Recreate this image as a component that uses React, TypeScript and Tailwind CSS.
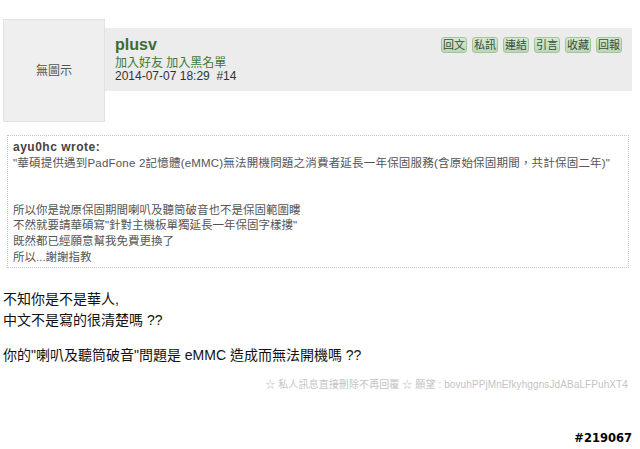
import React from "react";

const btns = ["回文", "私訊", "連結", "引言", "收藏", "回報"];

export default function App() {
  return (
    <div
      className="relative w-[640px] h-[449px] bg-white overflow-hidden text-[#222]"
      style={{ fontFamily: '"Liberation Sans", Arial, "Noto Sans CJK TC", sans-serif' }}
    >
      <div className="flex pt-[19px] pl-[3px]">
        <div className="w-[102px] h-[103px] bg-[#efefef] border border-[#e2e2e2] flex items-center justify-center text-[12px] text-[#555]">
          無圖示
        </div>
        <div className="mt-[9px] h-[63px] w-[527px] bg-[#ececec] flex justify-between pl-[10px] pr-[10px]">
          <div className="pt-[8px]">
            <div className="text-[16px] font-bold text-[#3d6b35] leading-[18px]">plusv</div>
            <div className="mt-[2px] text-[12px] leading-[14px] text-[#3d7a35]">加入好友 加入黑名單</div>
            <div className="text-[12px] leading-[13px] text-[#333]">2014-07-07 18:29 &nbsp;#14</div>
          </div>
          <div className="flex gap-[5px] pt-[9px]">
            {btns.map((b) => (
              <div
                key={b}
                className="w-[26px] h-[16px] rounded-[3px] border border-[#a3c49f] bg-gradient-to-b from-[#d4ead1] to-[#b9d8b5] flex items-center justify-center text-[11px] text-[#3b4a3a] leading-none"
              >
                {b}
              </div>
            ))}
          </div>
        </div>
      </div>

      <div className="ml-[7px] mt-[13px] w-[622px] h-[133px] border border-dotted border-[#c8c8c8] px-[5px] pt-[4px] text-[11.5px] leading-[15.7px] text-[#555] whitespace-nowrap">
        <div className="font-bold text-[#444] text-[12px] tracking-[0.5px]">ayu0hc wrote:</div>
        <div className="tracking-[0.2px]">"華碩提供遇到PadFone 2記憶體(eMMC)無法開機問題之消費者延長一年保固服務(含原始保固期間，共計保固二年)"</div>
        <div className="h-[15.7px]" />
        <div className="h-[15.7px]" />
        <div>所以你是說原保固期間喇叭及聽筒破音也不是保固範圍瞜</div>
        <div>不然就要請華碩寫"針對主機板單獨延長一年保固字樣摟"</div>
        <div>既然都已經願意幫我免費更換了</div>
        <div>所以...謝謝指教</div>
      </div>

      <div className="pl-[3px] mt-[21px] text-[14px] leading-[21px] text-[#111]">
        <div>不知你是不是華人,</div>
        <div>中文不是寫的很清楚嗎 ??</div>
        <div className="h-[14px]" />
        <div>你的"喇叭及聽筒破音"問題是 eMMC 造成而無法開機嗎 ??</div>
      </div>

      <div className="mt-[11px] pr-[12px] text-right text-[10px] text-[#c4c4c4] tracking-[0.1px]">
        ☆ 私人訊息直接刪除不再回覆 ☆ 願望 : bovuhPPjMnEfkyhggnsJdABaLFPuhXT4
      </div>

      <div
        className="absolute right-[8px] top-[430px] text-[11.5px] font-bold text-black"
        style={{
          fontFamily: '"DejaVu Sans", sans-serif',
          textShadow: "1px 0 #fff, -1px 0 #fff, 0 1px #fff, 0 -1px #fff",
        }}
      >
        #219067
      </div>
    </div>
  );
}
